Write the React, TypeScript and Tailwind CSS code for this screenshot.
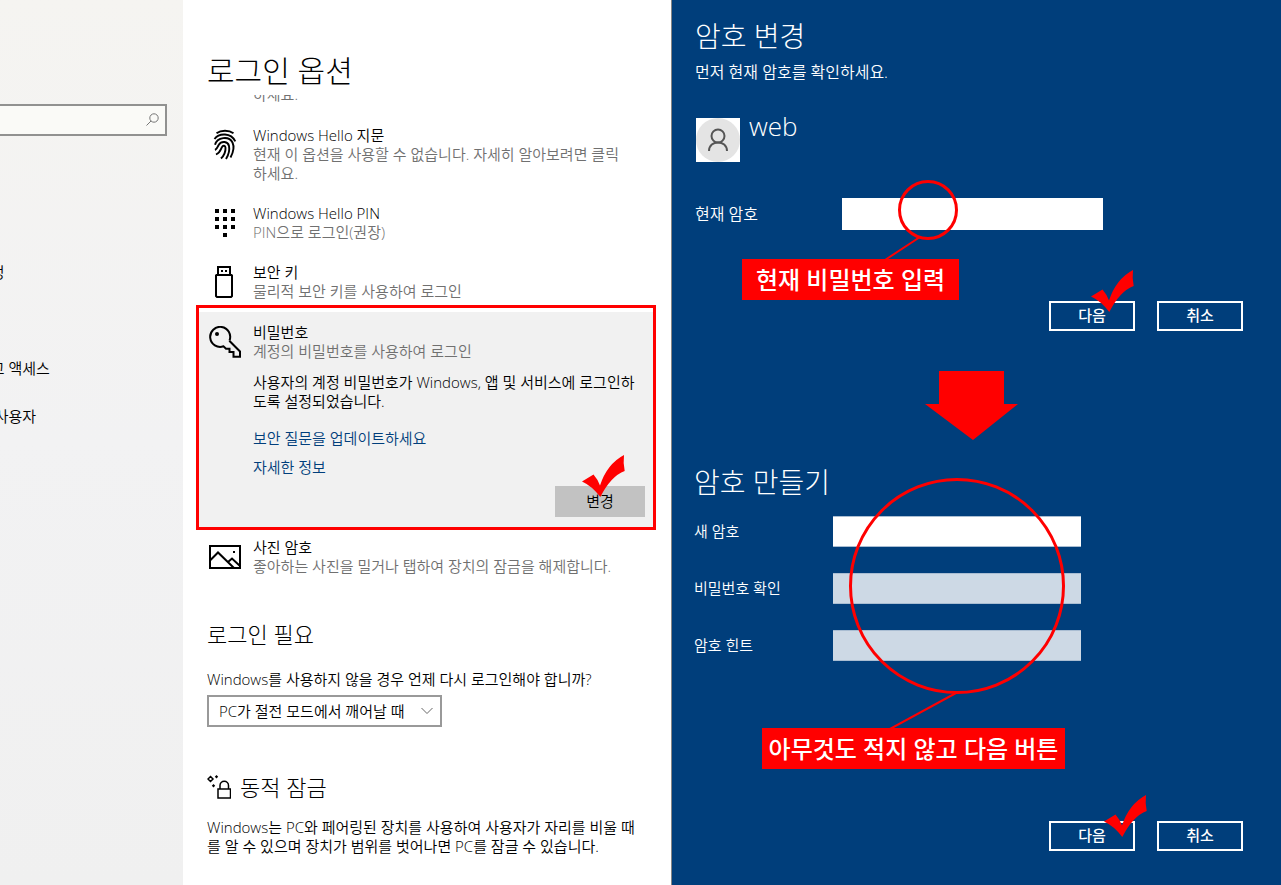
import { useState, type ReactNode } from 'react';
import { clsx } from 'clsx';

const accountLinks = ['이메일 및 계정', '로그인 옵션', '회사 또는 학교 액세스', '가족 및 다른 사용자'];

function FingerprintIcon() {
  return (
    <svg className="w-6 h-8" viewBox="0 0 24 32" fill="none" stroke="#000" strokeWidth="1.9">
      <path d="M3.500 4.200C8 1 16 1 20.500 4.200" />
      <path d="M1.500 10C6 3.700 18 3.500 22.300 12.300" />
      <path d="M2 15.800C4 8 16 6.500 19.500 13.500C21.500 18 20 24 17.500 28.500" />
      <path d="M2 21C4.500 20 4.500 17.500 5.800 15.800C8.500 11.500 15 12.300 16 17C16.800 21 15.500 26 13 30" />
      <path d="M3 25.500C7.500 23.500 7.800 20 9 18C10 16 12.400 16.500 12.500 18.700C12.700 22.500 11 26.500 8 29.500" />
    </svg>
  );
}

function PinIcon() {
  const dots = [
    [0, 0], [8, 0], [16, 0],
    [0, 8], [8, 8], [16, 8],
    [0, 16], [8, 16], [16, 16],
    [8, 24],
  ];
  return (
    <svg className="w-5 h-7" viewBox="0 0 20 28">
      {dots.map(([x, y]) => (
        <rect key={`${x}-${y}`} x={x} y={y} width="4" height="4" fill="#000" />
      ))}
    </svg>
  );
}

function UsbKeyIcon() {
  return (
    <svg className="w-5 h-8" viewBox="0 0 20 32" fill="none" stroke="#000" strokeWidth="2">
      <path d="M3 9V1H15V9" />
      <path d="M1.500 9H16.500L17 9.500V30L16 31H2L1 30V9.500Z" />
      <path d="M6 5H8M10 5H12" />
    </svg>
  );
}

function KeyIcon() {
  return (
    <svg className="w-8 h-8" viewBox="0 0 32 32" fill="none" stroke="#000" strokeWidth="2">
      <path d="M20.500 14.500A10 10 0 1 0 14.500 20.300L17 22.800H20.500V26H24.500V30.800H31V25.500L20.300 14.700" />
      <circle cx="8" cy="8" r="2" fill="#000" stroke="none" />
    </svg>
  );
}

function PictureIcon() {
  return (
    <svg className="w-8 h-6" viewBox="0 0 32 24" fill="none" stroke="#000" strokeWidth="2">
      <rect x="1" y="1" width="30" height="22" />
      <path d="M1 15.500L9 7.500L25 23M19 17L23 13.500L31 21" />
      <rect x="24" y="6" width="2" height="2" fill="#000" stroke="none" />
    </svg>
  );
}

function DynamicLockIcon() {
  return (
    <svg className="w-6 h-6" viewBox="0 0 24 24" fill="none" stroke="#000">
      <rect x="11" y="14" width="12.500" height="9" strokeWidth="1.500" />
      <path d="M13 14V10.500A4.200 4.200 0 0 1 21.500 10.500V14" strokeWidth="1.500" />
      <path d="M3.500 1.500L6 4L3.500 6.500L1 4Z" strokeWidth="1.500" />
      <path
        d="M9.500 0L11.200 1.700L9.500 3.400L7.800 1.700ZM6.500 9L8.200 10.700L6.500 12.400L4.800 10.700Z"
        fill="#000"
        stroke="none"
      />
    </svg>
  );
}

function CheckMark({ className }: { className?: string }) {
  return (
    <svg
      className={clsx('absolute w-[43px] h-[42px] pointer-events-none', className)}
      viewBox="0 0 43 42"
      fill="#ff0000"
    >
      <path d="M0 26.500L11.500 19.500Q15.500 24 18 30.500Q25 9 42 0Q41 8 42.700 16Q29 21 18.300 42Q10 31 0 26.500Z" />
    </svg>
  );
}

interface SignInOptionProps {
  icon: ReactNode;
  title: string;
  description: ReactNode;
  children?: ReactNode;
}

function SignInOption({ icon, title, description, children }: SignInOptionProps) {
  return (
    <div className="flex gap-[10px]">
      <div className="w-9 h-[38px] shrink-0 flex items-center justify-center">{icon}</div>
      <div className="flex-1 min-w-0">
        <h3>{title}</h3>
        <p className="text-[#707070]">{description}</p>
        {children}
      </div>
    </div>
  );
}

function DialogButtons({ checkClassName }: { checkClassName: string }) {
  const button =
    'block w-[86px] h-[30px] border-2 border-white pb-[2px] text-[15px] font-medium leading-5';
  return (
    <div className="flex justify-end gap-[22px]">
      <div className="relative">
        <button type="button" className={button}>다음</button>
        <CheckMark className={checkClassName} />
      </div>
      <button type="button" className={button}>취소</button>
    </div>
  );
}

function Callout({ className, children }: { className: string; children: ReactNode }) {
  return (
    <p
      className={clsx(
        'absolute h-[41px] flex items-center justify-center bg-[#ff0000] text-2xl font-medium whitespace-nowrap',
        className
      )}
    >
      {children}
    </p>
  );
}

function NewPasswordField({ id, label, active }: { id: string; label: string; active?: boolean }) {
  return (
    <div className="flex items-center">
      <label htmlFor={id} className="w-[139px] shrink-0 text-[15px]">{label}</label>
      <input
        id={id}
        type={id === 'hint' ? 'text' : 'password'}
        className={clsx(
          'w-[248px] h-[31px] border-y border-[#a9bdd2] px-2 text-black outline-none',
          active ? 'bg-white' : 'bg-[#cdd9e5]'
        )}
      />
    </div>
  );
}

export default function App() {
  const [wake, setWake] = useState('sleep');

  return (
    <div className="min-h-screen grid grid-cols-[183fr_489fr_609fr] bg-white text-black text-[15px] leading-[19px] font-[350] font-['Open_Sans','Noto_Sans_CJK_KR',sans-serif]">
      <aside className="min-w-0 overflow-hidden bg-linear-to-b from-[#f5f4f1] via-[#f2f2f3] to-[#f0f0f0] pt-[104px]">
        <div className="relative mr-4">
          <input
            type="search"
            aria-label="설정 찾기"
            className="block w-full h-8 border-2 border-l-0 border-[#919190] bg-[#fafaf7] pl-2 pr-8 outline-none"
          />
          <svg
            className="absolute right-2 top-[9px] w-[13px] h-[13px]"
            viewBox="0 0 13 13"
            fill="none"
            stroke="#777"
          >
            <circle cx="8" cy="5" r="4.200" />
            <path d="M5 8L0.500 12.500" />
          </svg>
        </div>
        <nav className="-ml-[86px] mt-[112px] flex flex-col items-start">
          {accountLinks.map((label) => (
            <a key={label} href="#" className="h-12 flex items-center whitespace-nowrap">
              {label}
            </a>
          ))}
        </nav>
      </aside>

      <main className="min-w-0 pt-[50px] pl-[13px] pr-[15px] border-r border-[#858585]">
        <h1 className="px-[11px] text-[30px] leading-[42px] font-light">로그인 옵션</h1>
        <div className="mt-[3px] ml-[57px] h-[9px] overflow-hidden flex items-end text-[#707070]">하세요.</div>

        <div className="mt-[22px] px-[11px] flex flex-col gap-[21px]">
          <SignInOption
            icon={<FingerprintIcon />}
            title="Windows Hello 지문"
            description={<>현재 이 옵션을 사용할 수 없습니다. 자세히 알아보려면 클릭<br />하세요.</>}
          />
          <SignInOption icon={<PinIcon />} title="Windows Hello PIN" description="PIN으로 로그인(권장)" />
          <SignInOption icon={<UsbKeyIcon />} title="보안 키" description="물리적 보안 키를 사용하여 로그인" />
        </div>

        <section className="mt-1 border-3 border-[#ff0000] pt-1">
          <div className="bg-[#f1f1f1] pt-[11px] pb-[10px] px-2">
            <SignInOption
              icon={<KeyIcon />}
              title="비밀번호"
              description="계정의 비밀번호를 사용하여 로그인"
            >
              <p className="mt-3">
                사용자의 계정 비밀번호가 Windows, 앱 및 서비스에 로그인하
                <br />
                도록 설정되었습니다.
              </p>
              <a href="#" className="block mt-[18px] text-[#003e7b]">보안 질문을 업데이트하세요</a>
              <a href="#" className="block mt-[10px] text-[#003e7b]">자세한 정보</a>
            </SignInOption>
            <div className="mt-[9px] flex justify-end">
              <div className="relative">
                <button type="button" className="block w-[90px] h-[31px] bg-[#c2c2c2]">변경</button>
                <CheckMark className="left-[27px] -top-[31px]" />
              </div>
            </div>
          </div>
        </section>

        <div className="mt-2 px-[11px]">
          <SignInOption
            icon={<PictureIcon />}
            title="사진 암호"
            description="좋아하는 사진을 밀거나 탭하여 장치의 잠금을 해제합니다."
          />

          <h2 className="mt-[43px] text-[22px] leading-[30px] font-light">로그인 필요</h2>
          <label htmlFor="wake" className="block mt-[21px]">
            Windows를 사용하지 않을 경우 언제 다시 로그인해야 합니까?
          </label>
          <div className="relative mt-[6px] w-[235px]">
            <select
              id="wake"
              value={wake}
              onChange={(e) => setWake(e.target.value)}
              className="block w-full h-8 appearance-none border-2 border-[#999] bg-white pl-[10px] pr-5 outline-none"
            >
              <option value="sleep">PC가 절전 모드에서 깨어날 때</option>
              <option value="never">안 함</option>
            </select>
            <svg
              className="absolute right-[9px] top-3 w-3 h-2 pointer-events-none"
              viewBox="0 0 12 8"
              fill="none"
              stroke="#666"
            >
              <path d="M0.500 1L6 6.500L11.500 1" />
            </svg>
          </div>

          <div className="mt-[45px] flex items-center gap-[9px]">
            <DynamicLockIcon />
            <h2 className="text-[22px] leading-[30px] font-light">동적 잠금</h2>
          </div>
          <p className="mt-4">
            Windows는 PC와 페어링된 장치를 사용하여 사용자가 자리를 비울 때
            <br />를 알 수 있으며 장치가 범위를 벗어나면 PC를 잠글 수 있습니다.
          </p>
        </div>
      </main>

      <div className="min-w-0 bg-[#003e7b] text-white">
        <section className="relative pt-4 pl-[23px] pr-[38px]">
          <h2 className="text-[28px] leading-10 font-light">암호 변경</h2>
          <p className="mt-[6px] text-base leading-5">먼저 현재 암호를 확인하세요.</p>

          <div className="mt-9 ml-px flex gap-[9px]">
            <svg className="w-11 h-11" viewBox="0 0 44 44" fill="none">
              <rect width="44" height="44" fill="#fff" />
              <circle cx="22" cy="22" r="22" fill="#e4e4e4" />
              <circle cx="22" cy="18" r="6.500" stroke="#555" strokeWidth="2" />
              <path d="M13 33C13 21.500 31 21.500 31 33" stroke="#555" strokeWidth="2" />
            </svg>
            <span className="text-[26px] leading-4 font-light">web</span>
          </div>

          <div className="mt-9 flex items-center">
            <label htmlFor="current" className="w-[147px] shrink-0 text-base">현재 암호</label>
            <input
              id="current"
              type="password"
              className="w-[261px] h-8 bg-white px-2 text-black outline-none"
            />
          </div>

          <div className="mt-[71px]">
            <DialogButtons checkClassName="left-[42px] -top-[31px]" />
          </div>

          <svg
            className="absolute left-[204px] top-[178px] w-[90px] h-[84px] pointer-events-none"
            viewBox="0 0 90 84"
            fill="none"
            stroke="#ff0000"
          >
            <circle cx="52" cy="32" r="28.500" strokeWidth="3" />
            <path d="M44 59L9 82" strokeWidth="2" />
          </svg>
          <Callout className="left-[70px] top-[259px] w-[217px]">현재 비밀번호 입력</Callout>
        </section>

        <svg className="block mt-10 ml-[253px] w-[93px] h-[69px]" viewBox="0 0 93 69" fill="#ff0000">
          <path d="M14 0H79V33H93L48 69L0 33H14Z" />
        </svg>

        <section className="relative pt-[22px] pl-[22px] pr-[38px]">
          <h2 className="text-[28px] leading-10 font-light">암호 만들기</h2>
          <div className="mt-[14px] flex flex-col gap-[26px]">
            <NewPasswordField id="new" label="새 암호" active />
            <NewPasswordField id="confirm" label="비밀번호 확인" />
            <NewPasswordField id="hint" label="암호 힌트" />
          </div>
          <div className="mt-[160px]">
            <DialogButtons checkClassName="left-[55px] -top-[26px]" />
          </div>

          <svg
            className="absolute left-[176px] top-[37px] w-[218px] h-[252px] pointer-events-none"
            viewBox="0 0 218 252"
            fill="none"
            stroke="#ff0000"
          >
            <circle cx="109" cy="109" r="106.500" strokeWidth="3" />
            <path d="M108 216L42 252" strokeWidth="2" />
          </svg>
          <Callout className="left-[90px] top-[288px] w-[303px]">아무것도 적지 않고 다음 버튼</Callout>
        </section>
      </div>
    </div>
  );
}
